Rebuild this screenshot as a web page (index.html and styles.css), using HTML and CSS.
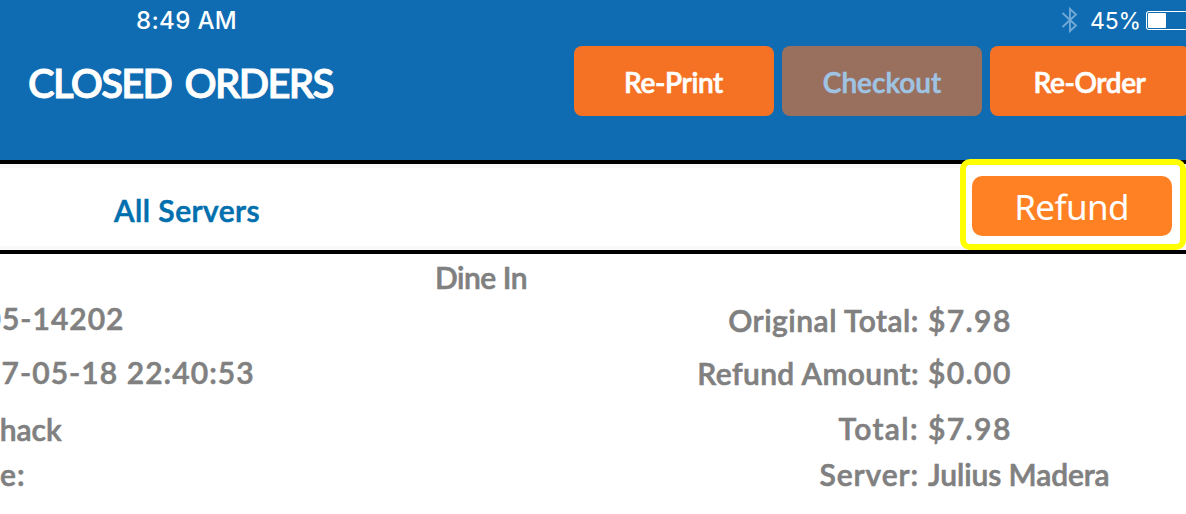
FILE: index.html
```html
<!DOCTYPE html>
<html lang="en">
<head>
<meta charset="utf-8">
<title>Closed Orders</title>
<link rel="stylesheet" href="styles.css">
</head>
<body>
<header class="header">
  <div class="status">
    <span class="time">8:49 AM</span>
    <div class="status-right">
      <svg class="bluetooth" width="17" height="28" viewBox="0 0 17 28" fill="none" stroke="#70a8d6" stroke-width="1.9"><path d="M1.5 7 L15 19.5 L9 25 V3 L15 8.5 L1.5 21"/></svg>
      <span class="percent">45%</span>
      <svg class="battery" width="40" height="20" viewBox="0 0 40 20"><rect x="0.5" y="1.5" width="52" height="18" rx="2.5" fill="none" stroke="#fff" stroke-width="1.1"/><rect x="2" y="3" width="18" height="15" rx="1" fill="#fff"/></svg>
    </div>
  </div>
  <div class="toolbar">
    <h1 class="title">CLOSED ORDERS</h1>
    <div class="actions">
      <button class="btn tight">Re-Print</button>
      <button class="btn disabled">Checkout</button>
      <button class="btn tight">Re-Order</button>
    </div>
  </div>
</header>
<section class="filter">
  <span class="servers">All Servers</span>
  <div class="highlight"><button class="refund">Refund</button></div>
</section>
<main class="details">
  <div class="dine">Dine In</div>
  <div class="columns">
    <div class="left">
      <div class="order-no">05-14202</div>
      <div class="date">7-05-18 22:40:53</div>
      <div class="shop">Shack</div>
      <div class="note">e:</div>
    </div>
    <div class="right">
      <div class="row original"><span class="label">Original Total:</span><span class="money">$7.98</span></div>
      <div class="row amount"><span class="label">Refund Amount:</span><span class="money">$0.00</span></div>
      <div class="row total"><span class="label">Total:</span><span class="money">$7.98</span></div>
      <div class="row server"><span class="label">Server:</span><span class="name">Julius Madera</span></div>
    </div>
  </div>
</main>
</body>
</html>
```
FILE: styles.css
```css
* { box-sizing: border-box; }

body {
  margin: 0;
  height: 514px;
  overflow: hidden;
  background: #fff;
  color: #808080;
  font: 600 30px/36px Lato, sans-serif;
  white-space: nowrap;
  -webkit-text-stroke: 0.6px currentColor;
}

button {
  border: 0;
  padding: 0;
  font: inherit;
}

.header {
  height: 160px;
  background: #0f6cb2;
  color: #fff;
  overflow: hidden;
}

.status {
  display: flex;
  justify-content: space-between;
  height: 46px;
  padding: 6px 0 0 136px;
  font: 500 24px/30px Inter, sans-serif;
  -webkit-text-stroke: 0;
}

.time { letter-spacing: 0.35px; }

.status-right {
  display: flex;
  width: 125px;
}

.bluetooth {
  flex: none;
  margin-right: 12px;
}

.percent {
  flex: none;
  width: 56px;
  font-size: 23px;
  font-weight: 400;
  letter-spacing: -0.2px;
}

.battery {
  flex: none;
  margin-top: 4px;
}

.toolbar {
  display: flex;
  justify-content: space-between;
  padding-left: 28px;
}

.title {
  margin: 13px 0 0;
  font-size: 40px;
  font-weight: 600;
  line-height: 48px;
  letter-spacing: -1.7px;
  word-spacing: 5px;
  -webkit-text-stroke: 0.9px currentColor;
}

.actions {
  display: flex;
  gap: 8px;
  width: 612px;
}

.btn {
  flex: none;
  width: 200px;
  height: 70px;
  padding: 2px 1px 0 0;
  border-radius: 8px;
  background: #f57224;
  color: #fff;
  font-size: 28px;
  line-height: 68px;
  -webkit-text-stroke: 0.6px currentColor;
}

.tight { letter-spacing: -0.4px; }

.disabled {
  padding-right: 0;
  background: #996f5e;
  color: #9fc4e3;
}

.filter {
  display: flex;
  justify-content: space-between;
  height: 94px;
  padding-left: 114px;
  border: solid #000;
  border-width: 4px 0;
  background: linear-gradient(#f9f9f9 4px, #fff 4px, #fff 82px, #f9f9f9 82px);
}

.servers {
  margin-top: 28px;
  color: #006fae;
  letter-spacing: 0.45px;
}

.highlight {
  width: 226px;
  height: 91px;
  margin-top: -5px;
  padding: 11px 6px;
  border: 6px solid #ff0;
  border-radius: 10px;
  background: #fff;
}

.refund {
  display: block;
  width: 200px;
  height: 60px;
  padding: 2px 1px 0 0;
  border-radius: 10px;
  background: #ff8123;
  color: #fff;
  font: 400 35px/58px "Noto Sans", sans-serif;
  letter-spacing: -0.6px;
  -webkit-text-stroke: 0;
}

.dine {
  padding: 5px 0 0 435px;
  letter-spacing: -0.5px;
}

.columns {
  display: flex;
  justify-content: space-between;
}

.left {
  width: 400px;
  padding-top: 5px;
  overflow: hidden;
}

.order-no {
  margin-left: -16.5px;
  letter-spacing: 1px;
}

.date {
  margin: 18px 0 0 1.5px;
  letter-spacing: 1.05px;
}

.shop { margin: 21px 0 0 -16.5px; }

.note {
  margin-top: 9px;
  letter-spacing: 1px;
}

.right {
  width: 586px;
  padding-top: 7px;
}

.row {
  display: grid;
  grid-template-columns: 319px 1fr;
  column-gap: 9px;
}

.label { text-align: right; }

.money { letter-spacing: 1.4px; }

.name { letter-spacing: -0.1px; }

.original .label { letter-spacing: 0.5px; }

.amount { margin-top: 17px; }

.amount .label { letter-spacing: 0.4px; }

.amount .money { margin-top: -1px; }

.total { margin-top: 19px; }

.total .label { letter-spacing: 1.4px; }

.server { margin-top: 10px; }

.server .label { letter-spacing: 0.9px; }
```
